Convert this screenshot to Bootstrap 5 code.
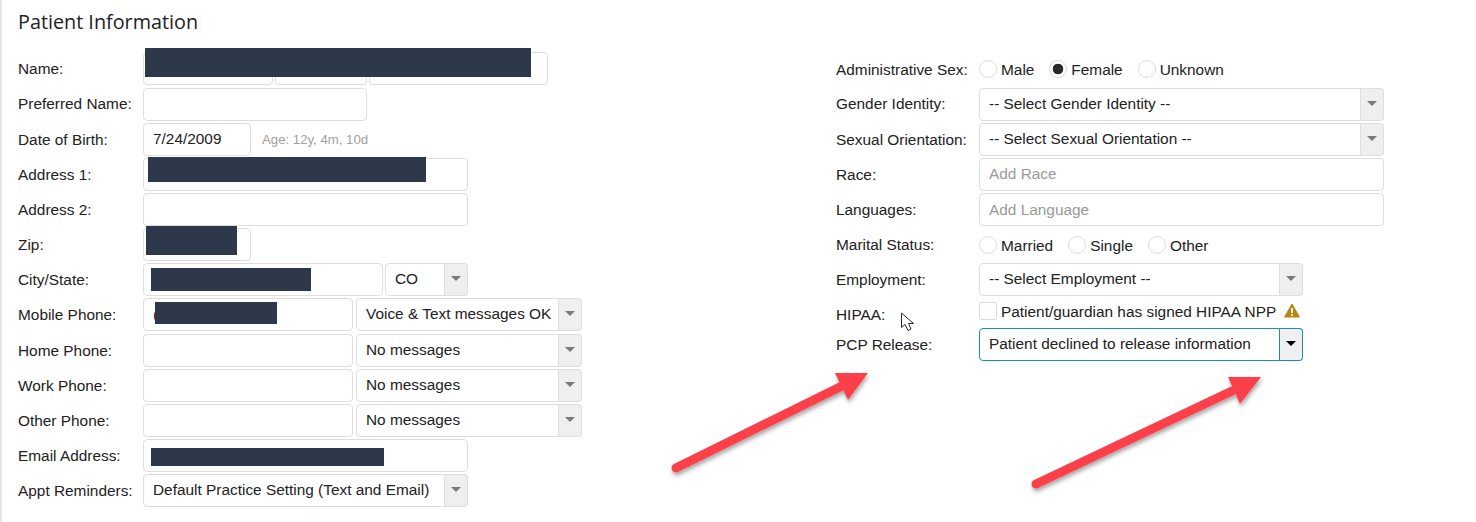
<!DOCTYPE html>
<html>
<head>
  <meta charset="utf-8">
  <meta name="viewport" content="width=device-width, initial-scale=1">
  <title>Patient Information</title>
  <link href="https://cdn.jsdelivr.net/npm/bootstrap@5.3.3/dist/css/bootstrap.min.css" rel="stylesheet">
  <script src="https://cdn.jsdelivr.net/npm/bootstrap@5.3.3/dist/js/bootstrap.bundle.min.js"></script>
<style>
  html, body { height: 100%; overflow: hidden; }
  body {
    background: #fff;
    color: #222;
    font-family: "Liberation Sans", Arial, sans-serif;
    font-size: 15.4px;
  }
  .sheet { position: relative; height: 522px; border-left: 2px solid #e6e6e6; padding-left: 16px; }
  .sheet-title {
    font-family: "Open Sans", sans-serif;
    font-size: 19.8px;
    font-weight: 400;
    line-height: 28px;
    margin: 0;
    padding-top: 8px;
    height: 52.3px;
    color: #222;
  }
  .col-left { width: 818px; }
  .col-right { width: 600px; }
  .frow { display: flex; align-items: center; gap: 2px; height: 33.17px; margin-bottom: 2px; }
  .frow-short { height: 30px; margin-bottom: 0; }
  .flabel { flex: none; }
  .flabel-low { padding-top: 2px; }
  .col-left .flabel { width: 123px; }
  .col-right .flabel { width: 141px; }
  .fbox, .fcombo .form-control {
    height: 33px;
    border: 1px solid #dedede;
    border-radius: 4px;
    padding: 0 9px;
    font-size: 15.4px;
    line-height: 31px;
    color: #222;
    box-shadow: none;
    flex: none;
  }
  .fbox::placeholder { color: #9a9a9a; opacity: 1; }
  .fcombo { flex-wrap: nowrap; height: 33px; flex: none; }
  .fcombo .form-control { flex: 1 1 auto; min-width: 0; width: 1%; white-space: nowrap; overflow: hidden; padding-right: 0; line-height: 30px; }
  .fcombo .input-group-text {
    width: 24px;
    padding: 0;
    justify-content: center;
    background: #efefef;
    border: 1px solid #dedede;
    border-left-color: #e4e4e4;
    border-radius: 0 4px 4px 0;
  }
  .caret-down { width: 0; height: 0; border-left: 5px solid transparent; border-right: 5px solid transparent; border-top: 5px solid #7a7a7a; margin-top: -2px; }
  .fcombo-open .form-control { border-color: #1b8ac4; }
  .fcombo-open .input-group-text { border-color: #1b8ac4; background: #f0f0f0; border-left-color: #8fb9d2; }
  .fcombo-open .caret-down { border-top-color: #000; }
  .w-130 { width: 130px; } .w-92 { width: 92px; } .w-179 { width: 179px; }
  .w-224 { width: 224px; } .w-108 { width: 108px; } .w-325 { width: 325px; }
  .w-240 { width: 240px; } .w-83 { width: 83px; } .w-210 { width: 210px; }
  .w-226 { width: 226px; margin-left: 1px; } .w-405 { width: 405px; } .w-324 { width: 324px; }
  .age-note { color: #a0a0a0; font-size: 13.2px; margin-left: 9px; padding-top: 2px; }
  .choice { display: flex; align-items: center; gap: 4px; margin-right: 13px; padding-top: 1px; }
  .choice-raised { margin-top: -5px; }
  .choice .form-check-input {
    width: 18px; height: 18px; margin: 0; flex: none;
    border: 1px solid #dcdcdc; background-color: #fff;
  }
  .choice .form-check-input:checked {
    background-color: #fff;
    border-color: #dcdcdc;
    background-image: radial-gradient(circle, #2b2b2b 0, #2b2b2b 5px, transparent 5.6px);
  }
  .choice .form-check-input[type=checkbox] { border-radius: 2px; }
  .warn-mark { margin-left: 4px; margin-top: -2px; }
  .blackout { position: absolute; background: #2d384a; }
  .b-name { left: 143px; top: 48px; width: 386px; height: 29px; }
  .b-addr { left: 146px; top: 157px; width: 278px; height: 25px; }
  .b-zip { left: 144px; top: 226px; width: 91px; height: 29px; }
  .b-city { left: 149px; top: 268px; width: 160px; height: 23px; }
  .b-mobile { left: 153px; top: 302px; width: 122px; height: 22px; }
  .b-email { left: 149px; top: 448px; width: 233px; height: 18px; }
  .mark-layer { position: absolute; left: -2px; top: 0; pointer-events: none; }
</style>
</head>
<body>

<div class="sheet">
  <h1 class="sheet-title">Patient Information</h1>

  <div class="d-flex">
    <!-- left column -->
    <div class="col-left">
      <div class="frow"><span class="flabel">Name:</span>
        <input class="form-control fbox w-130" type="text">
        <input class="form-control fbox w-92" type="text">
        <input class="form-control fbox w-179" type="text">
      </div>
      <div class="frow"><span class="flabel">Preferred Name:</span>
        <input class="form-control fbox w-224" type="text">
      </div>
      <div class="frow"><span class="flabel">Date of Birth:</span>
        <input class="form-control fbox w-108" type="text" value="7/24/2009">
        <span class="age-note">Age: 12y, 4m, 10d</span>
      </div>
      <div class="frow"><span class="flabel">Address 1:</span>
        <input class="form-control fbox w-325" type="text">
      </div>
      <div class="frow"><span class="flabel">Address 2:</span>
        <input class="form-control fbox w-325" type="text">
      </div>
      <div class="frow"><span class="flabel">Zip:</span>
        <input class="form-control fbox w-108" type="text">
      </div>
      <div class="frow"><span class="flabel">City/State:</span>
        <input class="form-control fbox w-240" type="text">
        <div class="input-group fcombo w-83">
          <div class="form-control">CO</div>
          <span class="input-group-text"><span class="caret-down"></span></span>
        </div>
      </div>
      <div class="frow"><span class="flabel">Mobile Phone:</span>
        <input class="form-control fbox w-210" type="text" value="(">
        <div class="input-group fcombo w-226">
          <div class="form-control">Voice &amp; Text messages OK</div>
          <span class="input-group-text"><span class="caret-down"></span></span>
        </div>
      </div>
      <div class="frow"><span class="flabel">Home Phone:</span>
        <input class="form-control fbox w-210" type="text">
        <div class="input-group fcombo w-226">
          <div class="form-control">No messages</div>
          <span class="input-group-text"><span class="caret-down"></span></span>
        </div>
      </div>
      <div class="frow"><span class="flabel">Work Phone:</span>
        <input class="form-control fbox w-210" type="text">
        <div class="input-group fcombo w-226">
          <div class="form-control">No messages</div>
          <span class="input-group-text"><span class="caret-down"></span></span>
        </div>
      </div>
      <div class="frow"><span class="flabel">Other Phone:</span>
        <input class="form-control fbox w-210" type="text">
        <div class="input-group fcombo w-226">
          <div class="form-control">No messages</div>
          <span class="input-group-text"><span class="caret-down"></span></span>
        </div>
      </div>
      <div class="frow"><span class="flabel">Email Address:</span>
        <input class="form-control fbox w-325" type="text">
      </div>
      <div class="frow"><span class="flabel">Appt Reminders:</span>
        <div class="input-group fcombo w-325">
          <div class="form-control">Default Practice Setting (Text and Email)</div>
          <span class="input-group-text"><span class="caret-down"></span></span>
        </div>
      </div>
    </div>

    <!-- right column -->
    <div class="col-right">
      <div class="frow"><span class="flabel flabel-low">Administrative Sex:</span>
        <label class="choice"><input class="form-check-input" type="radio" name="sex">Male</label>
        <label class="choice"><input class="form-check-input" type="radio" name="sex" checked>Female</label>
        <label class="choice"><input class="form-check-input" type="radio" name="sex">Unknown</label>
      </div>
      <div class="frow"><span class="flabel">Gender Identity:</span>
        <div class="input-group fcombo w-405">
          <div class="form-control">-- Select Gender Identity --</div>
          <span class="input-group-text"><span class="caret-down"></span></span>
        </div>
      </div>
      <div class="frow"><span class="flabel">Sexual Orientation:</span>
        <div class="input-group fcombo w-405">
          <div class="form-control">-- Select Sexual Orientation --</div>
          <span class="input-group-text"><span class="caret-down"></span></span>
        </div>
      </div>
      <div class="frow"><span class="flabel">Race:</span>
        <input class="form-control fbox w-405" type="text" placeholder="Add Race">
      </div>
      <div class="frow"><span class="flabel">Languages:</span>
        <input class="form-control fbox w-405" type="text" placeholder="Add Language">
      </div>
      <div class="frow"><span class="flabel">Marital Status:</span>
        <label class="choice"><input class="form-check-input" type="radio" name="marital">Married</label>
        <label class="choice"><input class="form-check-input" type="radio" name="marital">Single</label>
        <label class="choice"><input class="form-check-input" type="radio" name="marital">Other</label>
      </div>
      <div class="frow"><span class="flabel">Employment:</span>
        <div class="input-group fcombo w-324">
          <div class="form-control">-- Select Employment --</div>
          <span class="input-group-text"><span class="caret-down"></span></span>
        </div>
      </div>
      <div class="frow frow-short"><span class="flabel flabel-low">HIPAA:</span>
        <label class="choice choice-raised"><input class="form-check-input" type="checkbox">Patient/guardian has signed HIPAA NPP
          <svg class="warn-mark" width="16" height="15" viewBox="0 0 16 15">
            <path d="M8 1 L15.4 14 H0.6 Z" fill="#b8860f" stroke="#b8860f" stroke-linejoin="round"/>
            <rect x="7.1" y="5" width="1.8" height="5" fill="#fff"/>
            <rect x="7.1" y="11" width="1.8" height="1.8" fill="#fff"/>
          </svg>
        </label>
      </div>
      <div class="frow"><span class="flabel">PCP Release:</span>
        <div class="input-group fcombo fcombo-open w-324">
          <div class="form-control">Patient declined to release information</div>
          <span class="input-group-text"><span class="caret-down"></span></span>
        </div>
      </div>
    </div>
  </div>

  <!-- redactions painted on the screenshot -->
  <div class="blackout b-name"></div>
  <div class="blackout b-addr"></div>
  <div class="blackout b-zip"></div>
  <div class="blackout b-city"></div>
  <div class="blackout b-mobile"></div>
  <div class="blackout b-email"></div>

  <!-- arrows + mouse pointer -->
  <svg class="mark-layer" width="1476" height="522" viewBox="0 0 1476 522">
    <defs>
      <filter id="arrowshade" x="-10%" y="-20%" width="120%" height="150%">
        <feDropShadow dx="1" dy="3" stdDeviation="2.2" flood-color="#000" flood-opacity=".35"/>
      </filter>
    </defs>
    <g filter="url(#arrowshade)" fill="#fb4148" stroke="none">
      <path d="M676 468 L842 386" stroke="#fb4148" stroke-width="9" stroke-linecap="round" fill="none"/>
      <path d="M835 373 H868 L848 400 Z"/>
      <path d="M1036 484 L1232 391" stroke="#fb4148" stroke-width="9" stroke-linecap="round" fill="none"/>
      <path d="M1228 377 H1261 L1240 404 Z"/>
    </g>
    <path d="M901.5 313 L901.5 327.5 L905 324.5 L908 330.5 L911 329 L908.5 323.5 L913.5 323.5 Z" fill="#fff" stroke="#2a2a2a" stroke-width="1"/>
  </svg>
</div>

</body>
</html>
